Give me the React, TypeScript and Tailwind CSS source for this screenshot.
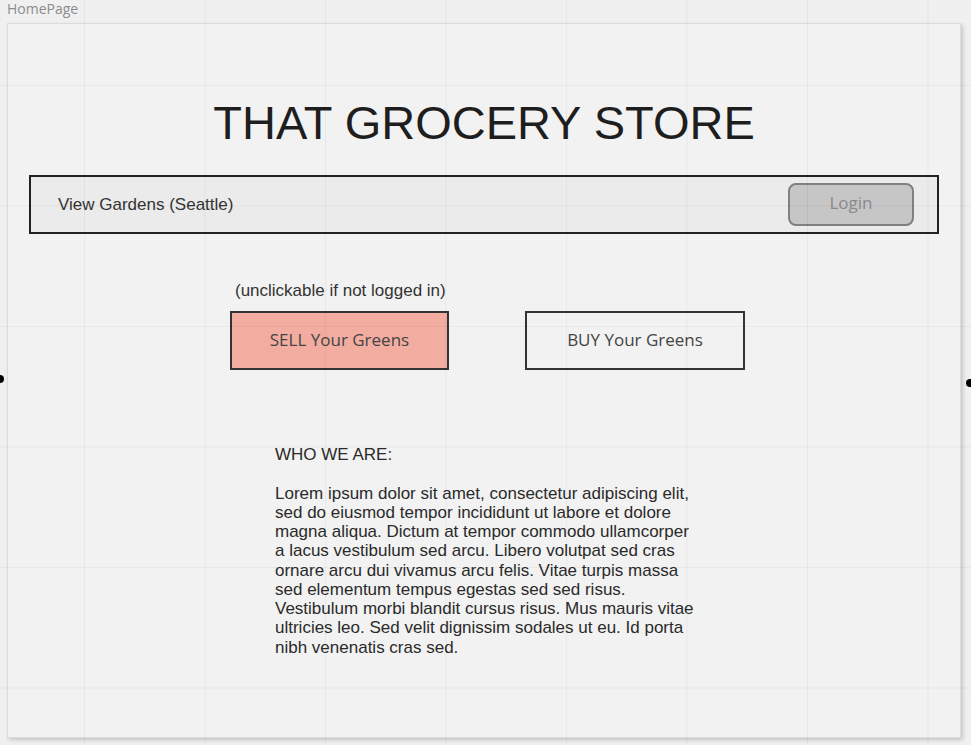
const GRID =
  "bg-[linear-gradient(to_right,rgba(0,0,0,0.045)_1px,transparent_1px),linear-gradient(to_bottom,rgba(0,0,0,0.045)_1px,transparent_1px)] bg-[size:120.5px_120.5px] bg-[position:84px_85px]";

const LOREM =
  "Lorem ipsum dolor sit amet, consectetur adipiscing elit, sed do eiusmod tempor incididunt ut labore et dolore magna aliqua. Dictum at tempor commodo ullamcorper a lacus vestibulum sed arcu. Libero volutpat sed cras ornare arcu dui vivamus arcu felis. Vitae turpis massa sed elementum tempus egestas sed sed risus. Vestibulum morbi blandit cursus risus. Mus mauris vitae ultricies leo. Sed velit dignissim sodales ut eu. Id porta nibh venenatis cras sed.";

function Header() {
  return (
    <div className="mx-[21px] mt-[29px] flex h-[59px] items-center justify-between border-2 border-[#222] bg-[#ebebeb] pl-[27px] pr-[23px]">
      <span className="pt-[1px] text-[17px] text-[#333] font-['Liberation_Sans',Arial,sans-serif]">
        View Gardens (Seattle)
      </span>
      <button className="flex h-[43px] w-[126px] items-center justify-center rounded-[8px] border-2 border-[#808080] bg-[#c6c6c6] pb-[3px] text-[17px] text-[#8a8a8a] font-['Open_Sans',sans-serif]">
        Login
      </button>
    </div>
  );
}

function ActionButtons() {
  return (
    <div className="ml-[222px] mt-[48px] flex flex-col">
      <span className="ml-[5px] text-[17px] leading-[18px] text-[#333] font-['Liberation_Sans',Arial,sans-serif]">
        (unclickable if not logged in)
      </span>
      <div className="mt-[11px] flex gap-[76px]">
        <button className="flex h-[59px] w-[219px] items-center justify-center border-2 border-[#333] bg-[#f2aca0] pb-[2px] text-[17px] text-[#444] font-['Open_Sans',sans-serif]">
          SELL Your Greens
        </button>
        <button className="flex h-[59px] w-[220px] items-center justify-center border-2 border-[#333] pb-[2px] text-[17px] text-[#444] font-['Open_Sans',sans-serif]">
          BUY Your Greens
        </button>
      </div>
    </div>
  );
}

function About() {
  return (
    <div className="ml-[267px] mt-[75px] w-[420px] text-[17px] leading-[19.25px] text-[#2a2a2a] font-['Liberation_Sans',Arial,sans-serif]">
      <p>WHO WE ARE:</p>
      <p className="mt-[19.25px]">{LOREM}</p>
    </div>
  );
}

export default function App() {
  return (
    <div className="relative h-[745px] w-[971px] overflow-hidden bg-[#f0f0f0]">
      <div className="px-[7px] text-[14px] leading-[18px] text-[#8c8c8c] font-['Open_Sans',sans-serif]">
        HomePage
      </div>
      <div className="ml-[7px] mt-[5px] flex h-[715px] w-[954px] flex-col border border-[#dcdcdc] bg-[#f2f2f2] shadow-[2px_2px_4px_rgba(0,0,0,0.18)]">
        <h1 className="mt-[75px] text-center text-[47px] leading-[47px] text-[#1e1e1e] font-['Liberation_Sans',Arial,sans-serif]">
          THAT GROCERY STORE
        </h1>
        <Header />
        <ActionButtons />
        <About />
      </div>
      <div className={`pointer-events-none absolute inset-0 ${GRID}`} />
      <div className="absolute left-[-4px] top-[375px] h-[8px] w-[8px] rounded-full bg-black" />
      <div className="absolute left-[966px] top-[379px] h-[8px] w-[8px] rounded-full bg-black" />
    </div>
  );
}
